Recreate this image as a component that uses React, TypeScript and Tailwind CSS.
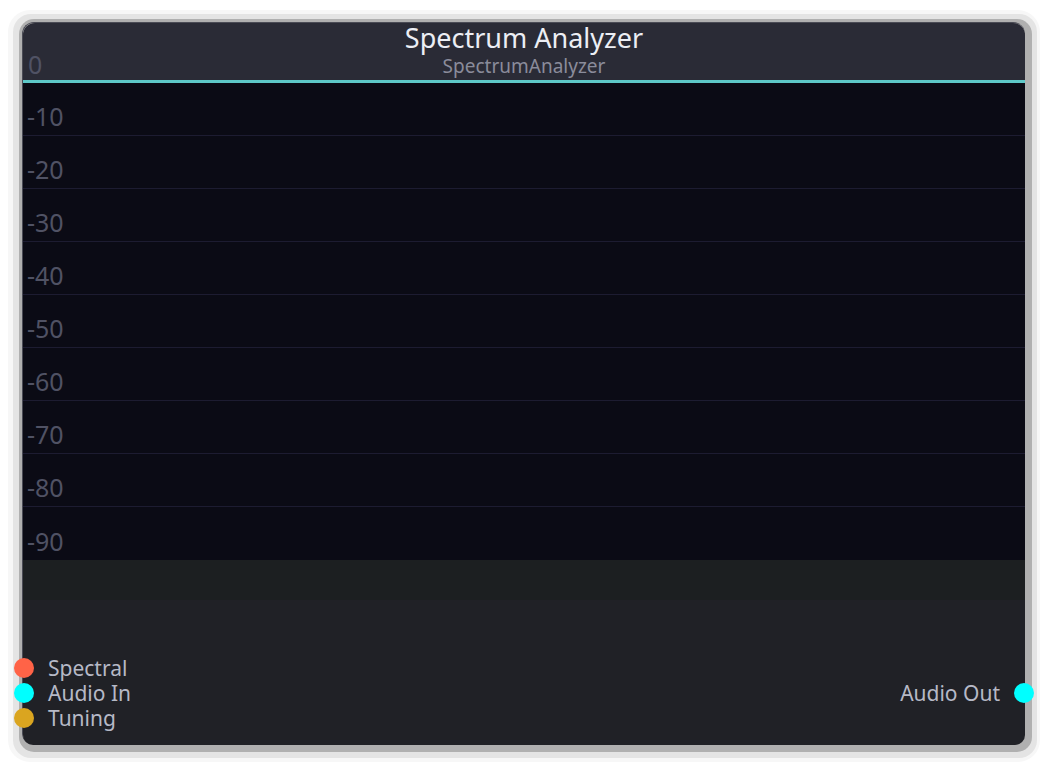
import React from "react";

const rows = ["-10", "-20", "-30", "-40", "-50", "-60", "-70", "-80", "-90"];

function Port({ label, color, side }: { label: string; color: string; side: "left" | "right" }) {
  if (side === "left") {
    return (
      <div className="relative h-[25px] flex items-center pl-[25px]">
        <span className={`absolute left-[-9px] top-[2px] w-[20px] h-[20px] rounded-full ${color}`} />
        <span className="text-[21px] leading-none text-[#b6b9c6]">{label}</span>
      </div>
    );
  }
  return (
    <div className="relative h-[25px] flex items-center justify-end pr-[25px]">
      <span className="text-[21px] leading-none text-[#b6b9c6]">{label}</span>
      <span className={`absolute right-[-9px] top-[2px] w-[20px] h-[20px] rounded-full ${color}`} />
    </div>
  );
}

export default function App() {
  return (
    <div
      className="w-[1048px] h-[768px] bg-white pt-[10px] pl-[8px]"
      style={{ fontFamily: '"Noto Sans", "Open Sans", sans-serif' }}
    >
      <div className="w-[1032px] h-[752px] rounded-[22px] bg-[#f7f7f7] pt-[4px] pl-[5px]">
        <div className="w-[1024px] h-[744px] rounded-[18px] bg-[#e4e4e4] pt-[5px] pl-[6px]">
          <div className="w-[1013px] h-[733px] rounded-[15px] bg-[#b0b0b0] pt-[3px] pl-[3px]">
            <div className="relative w-[1003px] h-[723px] rounded-[12px] flex flex-col border-l border-t border-[#4a4b55]">
              <div className="relative h-[57px] bg-[#2a2b36] rounded-tl-[12px] rounded-tr-[12px] flex flex-col items-center">
                <div className="text-[27px] leading-[30px] text-[#eceef4]">Spectrum Analyzer</div>
                <div className="mt-[3px] text-[19px] leading-[20px] text-[#8a8c9b]">SpectrumAnalyzer</div>
                <span className="absolute left-[5px] bottom-[3px] text-[25px] leading-none text-[#505264]">0</span>
              </div>
              <div className="h-[3px] bg-[#5ec8c8]" />
              <div className="flex flex-col bg-[#0b0b15]">
                {rows.map((r, i) => (
                  <div
                    key={r}
                    className={`relative h-[53px] ${i < rows.length - 1 ? "border-b border-[#1d1c31]" : ""}`}
                  >
                    <span className="absolute left-[4px] bottom-[6px] text-[25px] leading-none text-[#505264]">{r}</span>
                  </div>
                ))}
              </div>
              <div className="h-[40px] bg-[#1c1f21]" />
              <div className="flex-1 bg-[#202126] rounded-bl-[10px] rounded-br-[10px] pt-[56px]">
                <div className="flex">
                  <div className="flex-1 flex flex-col">
                    <Port label="Spectral" color="bg-[#ff6347]" side="left" />
                    <Port label="Audio In" color="bg-[#00ffff]" side="left" />
                    <Port label="Tuning" color="bg-[#daa520]" side="left" />
                  </div>
                  <div className="flex-1 flex flex-col pt-[25px]">
                    <Port label="Audio Out" color="bg-[#00ffff]" side="right" />
                  </div>
                </div>
              </div>
            </div>
          </div>
        </div>
      </div>
    </div>
  );
}
